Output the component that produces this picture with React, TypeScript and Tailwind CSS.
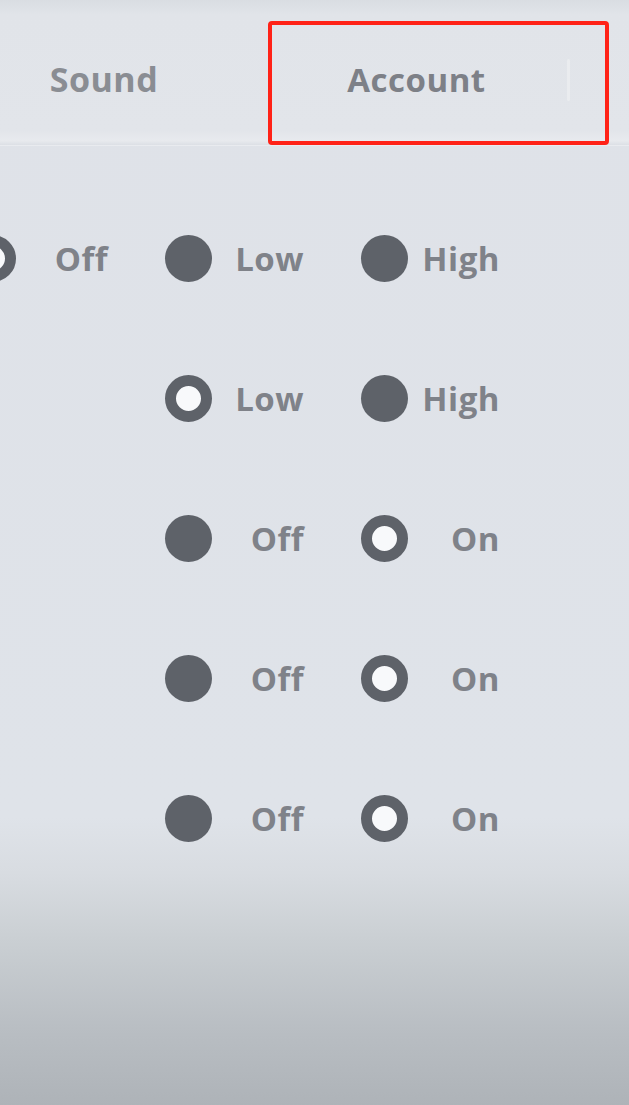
import React from "react";

type Opt = { kind: "filled" | "ring"; label: string } | null;

const rows: Opt[][] = [
  [{ kind: "ring", label: "Off" }, { kind: "filled", label: "Low" }, { kind: "filled", label: "High" }],
  [null, { kind: "ring", label: "Low" }, { kind: "filled", label: "High" }],
  [null, { kind: "filled", label: "Off" }, { kind: "ring", label: "On" }],
  [null, { kind: "filled", label: "Off" }, { kind: "ring", label: "On" }],
  [null, { kind: "filled", label: "Off" }, { kind: "ring", label: "On" }],
];

function Radio({ kind }: { kind: "filled" | "ring" }) {
  if (kind === "filled") {
    return <div className="w-[47px] h-[47px] rounded-full bg-[#5e6269] shrink-0" />;
  }
  return (
    <div className="w-[47px] h-[47px] rounded-full border-[11px] border-[#5e6269] bg-[#f8f9fb] shrink-0" />
  );
}

function Option({ opt }: { opt: Opt }) {
  if (!opt) return <div className="w-[139px]" />;
  return (
    <div className="w-[139px] flex items-center justify-between">
      <Radio kind={opt.kind} />
      <span className="text-[33px] leading-none font-bold text-[#7f8289] tracking-[0.5px]">{opt.label}</span>
    </div>
  );
}

export default function App() {
  return (
    <div
      className="relative w-full h-[1105px] overflow-hidden bg-[linear-gradient(to_bottom,#dfe2e8_0%,#dfe3e9_74%,#d8dce1_79%,#cacfd3_85%,#b9bec3_93%,#aeb3b8_100%)]"
      style={{ fontFamily: '"Open Sans", "Noto Sans", sans-serif' }}
    >
      {/* header */}
      <div className="h-[146px] flex items-center pt-[14px] bg-[linear-gradient(to_bottom,#d9dde2_0%,#e1e4e9_10%,#e2e5ea_90%,#e8eaee_97%,#dcdfe5_100%)] border-b border-[#e9ebef]">
        <div className="w-[268px] flex justify-center pr-[64px] pl-[4px]">
          <span className="text-[34px] font-bold text-[#8a8d93] tracking-[0.5px]">Sound</span>
        </div>
        <div className="w-[299px] flex justify-center">
          <span className="text-[33px] font-bold text-[#7d8087] tracking-[0.5px] pr-[2px]">Account</span>
        </div>
        <div className="w-[3px] h-[42px] bg-[#eaecef] rounded-full" />
      </div>

      {/* rows */}
      <div className="flex flex-col pt-[42px]">
        {rows.map((r, i) => (
          <div key={i} className="h-[140px] flex items-center ml-[-31px] gap-[57px]">
            <Option opt={r[0]} />
            <Option opt={r[1]} />
            <Option opt={r[2]} />
          </div>
        ))}
      </div>

      {/* red annotation box */}
      <div className="absolute left-[268px] top-[21px] w-[341px] h-[124px] border-[4px] border-[#ff2217] rounded-[4px]" />
    </div>
  );
}
